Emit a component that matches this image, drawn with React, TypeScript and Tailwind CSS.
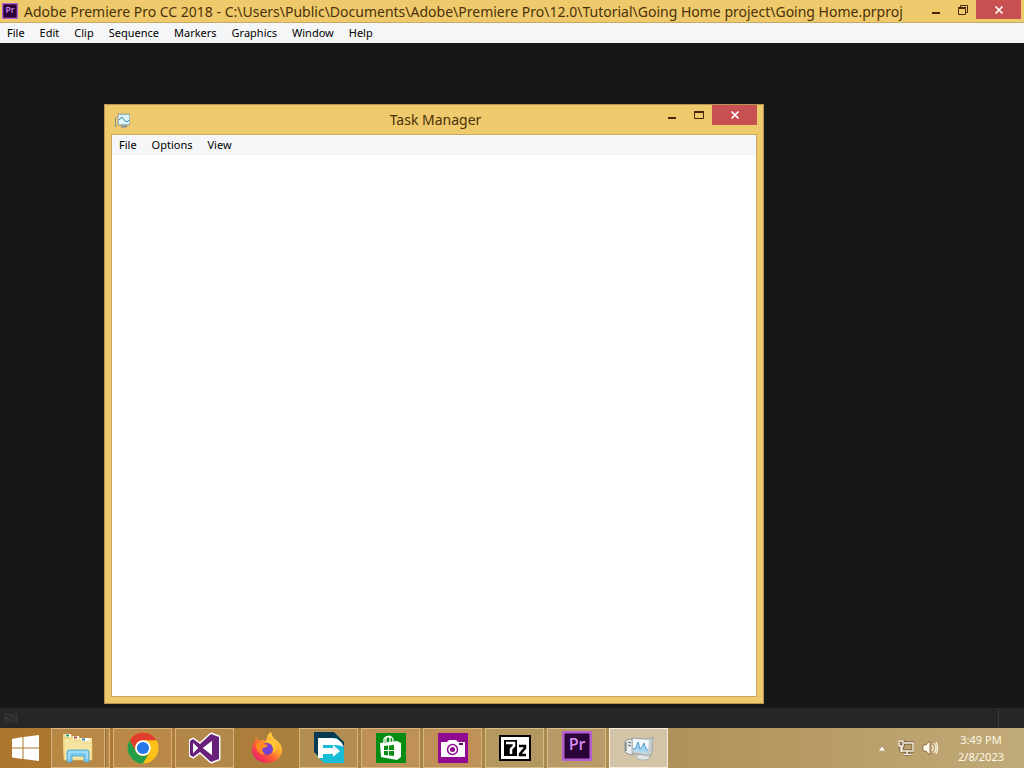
import React from 'react';

type IconProps = { className?: string };

const appMenu = ['File', 'Edit', 'Clip', 'Sequence', 'Markers', 'Graphics', 'Window', 'Help'];
const taskMenu = ['File', 'Options', 'View'];

const PremiereIcon: React.FC<IconProps> = ({ className }) => (
  <svg viewBox="0 0 30 30" className={className} aria-hidden="true">
    <rect width="30" height="30" rx="1" fill="#b55fd0" />
    <rect x="2.5" y="2.5" width="25" height="25" fill="#2b0338" />
    <text x="15" y="19" textAnchor="middle" fontFamily="Open Sans, sans-serif" fontSize="16" fontWeight="600" fill="#dc8cf5">Pr</text>
  </svg>
);

const MonitorIcon: React.FC<IconProps> = ({ className }) => (
  <svg viewBox="0 0 32 28" className={className} aria-hidden="true">
    <ellipse cx="20" cy="23" rx="7" ry="3" fill="#e2e4e4" stroke="#9aa3a6" strokeWidth=".7" />
    <path d="m2 7 4-2 4 1v15l-5-1-3-2z" fill="#eceeed" stroke="#7b8588" strokeWidth=".8" />
    <path d="M3 8v9M5 8l3 1M5 11l3 1" stroke="#596367" fill="none" />
    <path d="m9 4 18 1 3-2-1 16-2 3-18-3z" fill="#c6cdcf" stroke="#849096" strokeWidth=".6" />
    <path d="m10 5 16 1-1 13-15-2z" fill="#f4fbfd" />
    <path d="m10 15 3-1 2-6 2 7 2-2 2-4 2 6 2 1v3l-15-2z" fill="#a8d5ef" />
    <path d="m10 15 3-1 2-6 2 7 2-2 2-4 2 6 2 1" fill="none" stroke="#4c9bd1" />
  </svg>
);

const SmallMonitorIcon: React.FC<IconProps> = ({ className }) => (
  <svg viewBox="0 0 16 16" className={className} aria-hidden="true">
    <path d="M1.500 4v8M0 13h3" stroke="#8b9292" fill="none" />
    <rect x="4" y="1" width="12" height="11" fill="#b6cbd0" stroke="#879699" strokeWidth=".7" />
    <rect x="5" y="2" width="10" height="9" fill="#dcf5fb" />
    <path d="m5 7 3-3 3 4 2 1 2-2" stroke="#3d86ac" fill="none" />
    <path d="M7 13.500h6" stroke="#7995a3" strokeWidth="2" />
  </svg>
);

const FolderIcon = () => (
  <svg viewBox="0 0 32 30" className="h-[30px] w-8" aria-hidden="true">
    <path d="M1 2V1h7l2 2h6l2 2h12v22H2z" fill="#e9d07a" />
    <path d="M1 5h29v22H2z" fill="#f7e7a4" />
    <path d="m2 5 7 1 3 2h7l2 2h9v17H2z" fill="#f5e5a0" stroke="#e4c76b" strokeWidth=".6" />
    <path d="M3 2.500h6M11 4.500h6M19 6.500h8" stroke="#fff" strokeWidth="3" />
    <path d="M4 2.500h3" stroke="#269a50" strokeWidth="2" />
    <path d="M12 4.500h3" stroke="#b44b35" strokeWidth="2" />
    <path d="M20 6.500h3" stroke="#317eaa" strokeWidth="2" />
    <path d="M5 29V19q0-2 2-2h18q2 0 2 2v10h-5v-6H10v6z" fill="#77c9ef" stroke="#4ba5d0" strokeWidth=".8" />
    <path d="M7 26v-7h18v7" stroke="#c8effb" fill="none" />
  </svg>
);

const ChromeIcon = () => (
  <svg viewBox="0 0 32 32" className="size-8" aria-hidden="true">
    <circle cx="16" cy="16" r="15.500" fill="#fbc116" />
    <path d="M2.600 8.200A15.500 15.500 0 0 1 29.400 8.200H16A7.800 7.800 0 0 0 9.200 19.900z" fill="#e33b2e" />
    <path d="M2.600 8.200A15.500 15.500 0 0 0 16 31.500L22.800 19.900A7.800 7.800 0 0 1 9.200 19.900z" fill="#269b48" />
    <circle cx="16" cy="16" r="7.800" fill="#fff" />
    <circle cx="16" cy="16" r="6.100" fill="#2678e6" />
  </svg>
);

const VisualStudioIcon = () => (
  <svg viewBox="0 0 32 32" className="size-8" aria-hidden="true">
    <path
      d="M22 2 30 5v22l-8 3L11 20l-7 5-3-2V9l3-2 7 5zM4 11v10l5-5zm10 5 9 7V9z"
      fill="#68217a" fillRule="evenodd" stroke="#fff" strokeWidth="3" paintOrder="stroke" strokeLinejoin="round"
    />
    <path d="M4 11v10l5-5zM14 16l9 7V9z" fill="#fff" />
  </svg>
);

const FirefoxIcon = () => (
  <svg viewBox="0 0 32 32" className="size-8" aria-hidden="true">
    <defs>
      <linearGradient id="flame" x1="0.900" y1="0.100" x2="0.200" y2="0.900">
        <stop offset="0" stopColor="#ffe84a" />
        <stop offset=".4" stopColor="#ffa52b" />
        <stop offset=".7" stopColor="#ff5535" />
        <stop offset="1" stopColor="#ed246c" />
      </linearGradient>
    </defs>
    <path d="M15 9q1-7 5-9 1 5 5 8 7 5 6 12-3 11-15 11Q3 30 1 19q0-7 3-10l1-4 3 4 3-1z" fill="url(#flame)" />
    <circle cx="16" cy="17" r="6" fill="#7542cf" />
    <path d="M4 12q5-3 9 0l4 1q-1 3-5 3-2 3 2 6-6 1-8-4z" fill="#ff8b22" />
    <path d="M15 10q9 1 7 11 5-4 3-9-2-4-10-4z" fill="#ffc936" />
  </svg>
);

const ArrowAppIcon = () => (
  <svg viewBox="0 0 32 32" className="size-8" aria-hidden="true">
    <path d="M4 5h20l7 8v18H11l-7-7z" fill="#18bcd4" />
    <path d="M1 0h20l10 10v6L24 6H5v18l-4-4z" fill="#073b54" />
    <path d="M5 6h15q8 1 11 9-4-2-8-2H10v3h10v-3l7 6-7 6v-3H10v4H5z" fill="#fff" />
  </svg>
);

const StoreIcon = () => (
  <svg viewBox="0 0 30 30" className="size-[30px]" aria-hidden="true">
    <path fill="#078d13" d="M0 0h30v30H0z" />
    <path d="m4 10 17-2 4 2v14l-4 3-16-3z" fill="#fff" />
    <path d="M8 11V6q3-4 6-1v5M10 9V5q4-4 7 1v3" stroke="#fff" fill="none" strokeWidth="1.300" />
    <path d="m8 13 4-.5v4.500H8zm5-.5 5-.5v5h-5zM8 18h4v4.500L8 22zm5 0h5v5l-5-.5z" fill="#078d13" />
  </svg>
);

const CameraIcon = () => (
  <svg viewBox="0 0 30 30" className="size-[30px]" aria-hidden="true">
    <path fill="#900b91" d="M0 0h30v30H0z" />
    <path d="M3 9h6l2-2h7l2 2h7v15H3z" fill="#fff" />
    <circle cx="14.500" cy="16.500" r="5" fill="#fff" stroke="#900b91" strokeWidth="1.500" />
    <circle cx="14.500" cy="16.500" r="2.500" fill="#900b91" />
    <path d="M21 11h4" stroke="#5b0b60" strokeWidth="2" />
  </svg>
);

const SevenZipIcon = () => (
  <svg viewBox="0 0 32 26" className="h-[26px] w-8" aria-hidden="true">
    <path d="M0 0h32v26H0z" />
    <path d="M2 2h28v22H2z" fill="#fff" />
    <path d="M5 5h13v16H5z" />
    <path d="M7 8h8v3l-3 3v5" fill="none" stroke="#fff" strokeWidth="2.500" />
    <path d="M20 11h6v2l-5 6v1h6" fill="none" stroke="#000" strokeWidth="2.500" />
  </svg>
);

const WindowsIcon = () => (
  <svg viewBox="0 0 28 26" className="h-[26px] w-7" aria-hidden="true">
    <path d="m1 4 10.500-2v10.500H1zm11.500-2L28 0v12.500H12.500zM1 13.500h10.500V24L1 22.500zm11.500 0H28V26l-15.500-2z" fill="#fff" />
  </svg>
);

const apps = [
  { name: 'Google Chrome', icon: <ChromeIcon />, frame: 'border-[#dfbf8a]/80 bg-[#c08e50]/70' },
  { name: 'Visual Studio', icon: <VisualStudioIcon />, frame: 'border-[#dfbf8a]/80 bg-[#b68a50]/70' },
  { name: 'Firefox', icon: <FirefoxIcon />, frame: 'border-transparent' },
  { name: 'Free Download Manager', icon: <ArrowAppIcon />, frame: 'border-[#dfbf8a]/80 bg-[#b9985f]/60' },
  { name: 'Store', icon: <StoreIcon />, frame: 'border-[#dfbf8a]/80 bg-[#c79560]/70' },
  { name: 'Camera', icon: <CameraIcon />, frame: 'border-[#dfbf8a]/80 bg-[#c8955f]/70' },
  { name: '7-Zip', icon: <SevenZipIcon />, frame: 'border-[#dfc78f]/80 bg-[#b8a06b]/70' },
  { name: 'Adobe Premiere Pro', icon: <PremiereIcon className="mb-1 size-[30px]" />, frame: 'border-[#dfc996]/80 bg-[#bea074]/70' },
  { name: 'Task Manager', icon: <MonitorIcon className="h-7 w-8" />, frame: 'border-[#f7eee0] bg-[#d3c3a7]' },
];

const MenuBar: React.FC<{ items: string[]; className?: string }> = ({ items, className = '' }) => (
  <nav className={`flex h-5 shrink-0 items-center gap-px bg-[#f5f6f7] text-[11px] text-black ${className}`}>
    {items.map(item => (
      <button key={item} className="h-5 px-[7px] leading-5">{item}</button>
    ))}
  </nav>
);

const CloseGlyph = () => (
  <svg viewBox="0 0 10 10" className="size-[10px]" aria-hidden="true">
    <path d="m1.500 1.500 7 7m0-7-7 7" stroke="#fff" strokeWidth="1.700" />
  </svg>
);

const MinimizeGlyph = () => (
  <svg viewBox="0 0 8 10" className="h-[10px] w-2" aria-hidden="true">
    <path d="M0 7h8v2H0z" fill="#472608" />
  </svg>
);

const TaskManager = () => (
  <section className="absolute top-[61px] left-[104px] flex h-[600px] w-[660px] flex-col border border-[#b79550] bg-[#efca6c] px-[6px] pb-[6px]">
    <header className="flex h-[29px] shrink-0 items-start">
      <div className="flex flex-1 pt-2 pl-[3px]">
        <SmallMonitorIcon className="size-4" />
      </div>
      <h1 className="text-[14px] leading-[30px] text-[#4b3109]">Task Manager</h1>
      <div className="flex flex-1 justify-end">
        <button aria-label="Minimize" className="flex h-5 w-[27px] items-center justify-center"><MinimizeGlyph /></button>
        <button aria-label="Maximize" className="flex h-5 w-[27px] items-center justify-center">
          <svg viewBox="0 0 10 8" className="h-2 w-[10px]" aria-hidden="true">
            <path d="M.5 1.500h9v6h-9z" fill="none" stroke="#472608" />
            <path d="M0 1h10" stroke="#472608" strokeWidth="2" />
          </svg>
        </button>
        <button aria-label="Close" className="flex h-5 w-[45px] items-center justify-center bg-[#c75050]"><CloseGlyph /></button>
      </div>
    </header>
    <div className="flex flex-1 flex-col border border-[#c7a960] bg-white">
      <MenuBar items={taskMenu} className="border-b border-[#eff0f1]" />
    </div>
  </section>
);

const Taskbar = () => (
  <footer className="flex h-10 shrink-0 bg-linear-to-r from-[#ac762d] via-[#a9864a] to-[#c0aa78]">
    <button aria-label="Start" className="mr-px flex w-[50px] items-center justify-center"><WindowsIcon /></button>
    <div className="flex gap-[3px]">
      <button aria-label="File Explorer" className="flex w-[59px] border border-[#dfbf8a]/80 bg-[#bd8f4e]/70">
        <span className="flex h-full flex-1 items-center justify-center border-r border-[#dfbf8a]/80"><FolderIcon /></span>
        <span className="h-full w-1 border-l border-[#765022]/60" />
      </button>
      {apps.map(app => (
        <button key={app.name} aria-label={app.name} className={`flex w-[59px] items-center justify-center border ${app.frame}`}>
          {app.icon}
        </button>
      ))}
    </div>
    <div className="ml-auto flex items-center text-[#fff8e9]">
      <button aria-label="Show hidden icons" className="flex h-10 w-6 items-center justify-center">
        <svg viewBox="0 0 8 5" className="h-[5px] w-2" aria-hidden="true"><path d="m0 5 4-5 4 5z" fill="#fff8ec" stroke="#8b6947" strokeWidth=".5" /></svg>
      </button>
      <button aria-label="Network" className="flex h-10 w-6 items-center justify-center">
        <svg viewBox="0 0 16 16" className="size-4" fill="none" aria-hidden="true">
          <path d="M6 3h9v8H4V7M9 11v3M6 14.500h7M1 1h4v5H1zM3 6v6" stroke="#665238" strokeWidth="3" />
          <path d="M6 3h9v8H4V7M9 11v3M6 14.500h7M1 1h4v5H1zM3 6v6" stroke="#fff8e8" strokeWidth="1.400" />
        </svg>
      </button>
      <button aria-label="Volume" className="flex h-10 w-6 items-center justify-center">
        <svg viewBox="0 0 16 16" className="size-4" fill="none" aria-hidden="true">
          <path d="M1 5h3l4-4v14l-4-4H1z" fill="#fff8e8" stroke="#75603f" strokeWidth=".7" />
          <path d="M10 5q2 3 0 6M12 3q4 5 0 10M14 2q3 6 0 12" stroke="#fff8e8" strokeWidth="1.200" />
        </svg>
      </button>
      <button className="mr-[17px] ml-[13px] w-[52px] text-center text-[11px] leading-[17px] whitespace-nowrap">
        <time className="block">3:49 PM</time>
        <time className="block">2/8/2023</time>
      </button>
    </div>
  </footer>
);

const App: React.FC = () => {
  return (
    <div className="flex min-h-screen flex-col overflow-hidden bg-[#171717] font-['Noto_Sans','Open_Sans',sans-serif]">
      <header className="flex h-[23px] shrink-0 items-start border-b border-[#c7a967] bg-[#efca6c] pr-[3px]">
        <PremiereIcon className="mt-[3px] ml-[2px] size-4" />
        <h1 className="ml-[6px] min-w-0 flex-1 text-[14px] leading-[23px] whitespace-nowrap text-[#4b3109]">
          {'Adobe Premiere Pro CC 2018 - C:\\Users\\Public\\Documents\\Adobe\\Premiere Pro\\12.0\\Tutorial\\Going Home project\\Going Home.prproj'}
        </h1>
        <button aria-label="Minimize" className="flex h-[19px] w-[27px] items-center justify-center"><MinimizeGlyph /></button>
        <button aria-label="Restore" className="flex h-[19px] w-[27px] items-center justify-center">
          <svg viewBox="0 0 10 10" className="size-[10px]" aria-hidden="true">
            <path d="M2.500 2V.5h7v7H8M.5 3.500h7v6h-7zM0 2.500h8" fill="none" stroke="#472608" />
          </svg>
        </button>
        <button aria-label="Close" className="flex h-[19px] w-[45px] items-center justify-center bg-[#c75050]"><CloseGlyph /></button>
      </header>
      <MenuBar items={appMenu} />
      <main className="relative flex-1">
        <TaskManager />
      </main>
      <div className="flex h-5 shrink-0 items-center justify-between bg-[#262626] pr-[25px] pl-1">
        <svg viewBox="0 0 14 10" className="h-[10px] w-[14px]" fill="none" stroke="#414141" aria-hidden="true">
          <path d="M4 1H1v8h3M1 5h2M10 1h3v8h-3" />
          <circle cx="7" cy="5" r="3.500" />
          <path d="m5 7 4-4" />
        </svg>
        <span className="h-5 border-l border-[#383838]" />
      </div>
      <Taskbar />
    </div>
  );
};

export default App;
